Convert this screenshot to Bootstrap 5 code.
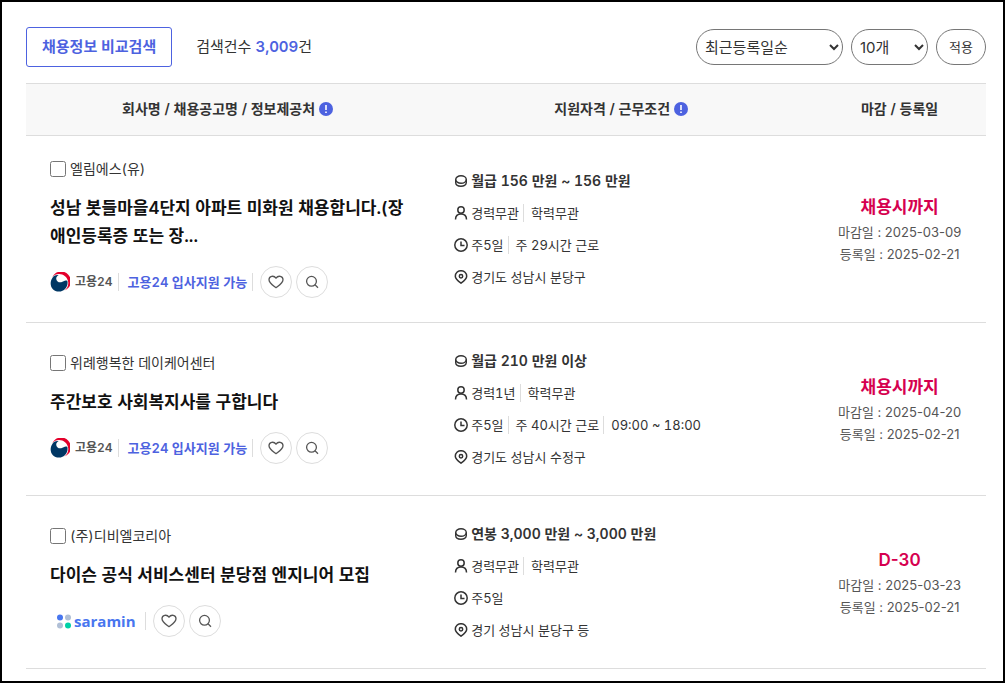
<!DOCTYPE html>
<html lang="ko">
<head>
<meta charset="utf-8">
<meta name="viewport" content="width=device-width, initial-scale=1">
<title>채용정보 검색</title>
<link href="https://cdn.jsdelivr.net/npm/bootstrap@5.3.0/dist/css/bootstrap.min.css" rel="stylesheet">
<style>
:root { --point: #4d62e0; --ink: #333; }
body { font-family: Inter, "Noto Sans CJK KR", sans-serif; font-variant-numeric: tabular-nums; color: var(--ink); background: #fff; font-size: 13px; line-height: 20px; }
.page-frame { border: 2px solid #000; min-height: 100vh; padding: 25px 17px 12px 24px; }
.compare-btn { border: 1px solid var(--point); color: var(--point); background: #fff; border-radius: 3px; height: 40px; padding: 0 15px; font-size: 15px; font-weight: 600; }
.result-count { font-size: 15px; }
.result-count strong { color: var(--point); font-weight: 600; }
.pill { height: 36px; border: 1px solid #767676; border-radius: 18px; background: #fff; color: var(--ink); }
select.pill { font-size: 15px; padding: 0 4px; }
.pill-sort { width: 147px; }
.pill-size { width: 77px; }
.pill-apply { font-size: 13px; width: 50px; padding: 0; }
.job-table { border-collapse: collapse; table-layout: fixed; }
.job-table th { height: 52px; padding-bottom: 3px; background: #f8f8f8; font-size: 14px; font-weight: 600; text-align: center; }
.job-table tr { border-bottom: 1px solid #ddd; }
.job-table thead tr { border-top: 1px solid #ddd; }
.job-table td { vertical-align: middle; }
.col-job { width: 42%; }
.col-date { width: 18%; }
.cell-job { padding: 24px; }
.cell-cond { padding: 22px 25px; }
.company { font-size: 14px; line-height: 18px; }
.company input { width: 16px; height: 16px; margin: 0; }
.job-title { font-size: 17px; line-height: 28px; font-weight: 600; color: #111; word-break: break-all; }
.job-title a, .apply-link { color: inherit; text-decoration: none; }
.job-table .apply-link { color: var(--point); font-weight: 600; }
.vbar { width: 1px; height: 18px; background: #ddd; }
.source { gap: 5px; }
.brand-gov { font-size: 12px; font-weight: 600; color: #555; }
.brand-saramin { font: 700 15px/20px "Open Sans", sans-serif; color: #4876ef; }
.saramin-logo { gap: 2px; padding: 0 4px 0 7px; }
.tools { margin-left: 2px; }
.round-btn { width: 32px; height: 32px; border: 1px solid #ddd; border-radius: 50%; background: #fff; padding: 0; }
.round-btn svg { display: block; margin: auto; }
.cond { height: 32px; gap: 3px; }
.cond-pay { font-size: 14px; font-weight: 600; }
.cond .vbar { margin: 0 4px 0 1px; }
.due { font-size: 17px; line-height: 28px; font-weight: 600; color: #d6004f; font-variant-numeric: normal; }
.dates { line-height: 22px; color: #555; font-size: 13px; font-variant-numeric: normal; }
</style>
</head>
<body>
<svg class="d-none">
  <symbol id="i-info" viewBox="0 0 14 14"><circle cx="7" cy="7" r="7" fill="#4d62e0"/><path d="M7 3v5M7 9.500v1.500" stroke="#fff" stroke-width="1.600" fill="none"/></symbol>
  <symbol id="i-coin" viewBox="0 0 14 14"><g fill="none" stroke="#333" stroke-width="1.400"><ellipse cx="7" cy="5.500" rx="5.300" ry="3.800"/><path d="M1.700 5.500v3c0 5 10.600 5 10.600 0v-3"/></g></symbol>
  <symbol id="i-user" viewBox="0 0 14 14"><g fill="none" stroke="#333" stroke-width="1.500"><circle cx="7" cy="4" r="3.200"/><path d="M1.500 13.500c0-3.500 2.200-5.500 5.500-5.500s5.500 2 5.500 5.500"/></g></symbol>
  <symbol id="i-clock" viewBox="0 0 14 14"><g fill="none" stroke="#333" stroke-width="1.500"><circle cx="7" cy="7" r="6.200"/><path d="M7 3.500v4h3.500"/></g></symbol>
  <symbol id="i-pin" viewBox="0 0 14 14"><g fill="none" stroke="#333" stroke-width="1.500"><path d="M7 13.200C4 11 1.300 9 1.300 6.200a5.700 5.500 0 0 1 11.400 0C12.700 9 10 11 7 13.200z"/><circle cx="7" cy="6.300" r="1.700"/></g></symbol>
  <symbol id="i-heart" viewBox="0 0 16 16"><path d="M8 13.700C5 11.400 1 9 1 5.700 1 2 5.800 1 8 4.200 10.200 1 15 2 15 5.700 15 9 11 11.400 8 13.700z" fill="none" stroke="#555" stroke-width="1.300" stroke-linejoin="round"/></symbol>
  <symbol id="i-search" viewBox="0 0 16 16"><g fill="none" stroke="#555" stroke-width="1.300"><circle cx="7.500" cy="7.300" r="4.900"/><path d="M11 10.800l3 3"/></g></symbol>
  <symbol id="i-gov" viewBox="0 0 20 20"><path d="M2.200 5.200A9.800 9.800 0 1 1 14.500 18.500c2.800-2.200 4.100-5 3.700-8.500C17.500 5 13.500 1.900 9 1.900c-2.800 0-5 1.100-6.800 3.300z" fill="#e4002b"/><path d="M2.200 6.200C3.500 3.900 6 2.700 8.600 3.200 6.800 4 6 5.500 6.300 7.200c.4 2.200 2.600 3.600 4.900 3 2.300-.6 3.700-2.300 6.200-1.300C18.400 14 15 19.300 8.900 19.600 2 19.600-1.600 12.400 2.200 6.200z" fill="#003764"/></symbol>
  <symbol id="i-dots" viewBox="0 0 15 15"><circle cx="3" cy="3.500" r="3" fill="#4876ef"/><circle cx="11" cy="3.500" r="3" fill="#b0bfd6"/><circle cx="3" cy="11.500" r="3" fill="#b0bfd6"/><circle cx="11" cy="11.500" r="3" fill="#00d1a7"/></symbol>
</svg>
<main class="page-frame">
  <div class="d-flex align-items-center justify-content-between mb-3">
    <div class="d-flex align-items-center gap-4">
      <button type="button" class="compare-btn">채용정보 비교검색</button>
      <div class="result-count">검색건수 <strong>3,009</strong>건</div>
    </div>
    <form class="d-flex gap-2">
      <select class="pill pill-sort" aria-label="정렬"><option>최근등록일순</option></select>
      <select class="pill pill-size" aria-label="표시 개수"><option>10개</option></select>
      <button type="button" class="pill pill-apply">적용</button>
    </form>
  </div>
  <table class="job-table w-100">
    <colgroup><col class="col-job"><col><col class="col-date"></colgroup>
    <thead><tr>
      <th scope="col"><span class="d-flex align-items-center justify-content-center gap-1">회사명 / 채용공고명 / 정보제공처 <svg width="14" height="14"><use href="#i-info"/></svg></span></th>
      <th scope="col"><span class="d-flex align-items-center justify-content-center gap-1">지원자격 / 근무조건 <svg width="14" height="14"><use href="#i-info"/></svg></span></th>
      <th scope="col">마감 / 등록일</th>
    </tr></thead>
    <tbody>
      <tr>
        <td class="cell-job">
          <div class="company d-flex align-items-center gap-1"><input type="checkbox" id="job1"><label for="job1">엘림에스(유)</label></div>
          <div class="job-title my-3"><a href="#">성남 봇들마을4단지 아파트 미화원 채용합니다.(장애인등록증 또는 장...</a></div>
          <div class="source d-flex align-items-center">
            <svg width="20" height="20"><use href="#i-gov"/></svg><span class="brand-gov">고용24</span><span class="vbar"></span>
            <a href="#" class="apply-link ms-1">고용24 입사지원 가능</a><span class="vbar"></span>
            <div class="tools d-flex gap-1">
              <button type="button" class="round-btn" aria-label="관심"><svg width="16" height="16"><use href="#i-heart"/></svg></button>
              <button type="button" class="round-btn" aria-label="미리보기"><svg width="16" height="16"><use href="#i-search"/></svg></button>
            </div>
          </div>
        </td>
        <td class="cell-cond">
          <div class="cond cond-pay d-flex align-items-center"><svg width="14" height="14"><use href="#i-coin"/></svg>월급 156 만원 ~ 156 만원</div>
          <div class="cond d-flex align-items-center"><svg width="14" height="14"><use href="#i-user"/></svg><span>경력무관</span><span class="vbar"></span><span>학력무관</span></div>
          <div class="cond d-flex align-items-center"><svg width="14" height="14"><use href="#i-clock"/></svg><span>주5일</span><span class="vbar"></span><span>주 29시간 근로</span></div>
          <div class="cond d-flex align-items-center"><svg width="14" height="14"><use href="#i-pin"/></svg>경기도 성남시 분당구</div>
        </td>
        <td class="text-center"><div class="due">채용시까지</div><div class="dates">마감일 : 2025-03-09<br>등록일 : 2025-02-21</div></td>
      </tr>
      <tr>
        <td class="cell-job">
          <div class="company d-flex align-items-center gap-1"><input type="checkbox" id="job2"><label for="job2">위례행복한 데이케어센터</label></div>
          <div class="job-title my-3"><a href="#">주간보호 사회복지사를 구합니다</a></div>
          <div class="source d-flex align-items-center">
            <svg width="20" height="20"><use href="#i-gov"/></svg><span class="brand-gov">고용24</span><span class="vbar"></span>
            <a href="#" class="apply-link ms-1">고용24 입사지원 가능</a><span class="vbar"></span>
            <div class="tools d-flex gap-1">
              <button type="button" class="round-btn" aria-label="관심"><svg width="16" height="16"><use href="#i-heart"/></svg></button>
              <button type="button" class="round-btn" aria-label="미리보기"><svg width="16" height="16"><use href="#i-search"/></svg></button>
            </div>
          </div>
        </td>
        <td class="cell-cond">
          <div class="cond cond-pay d-flex align-items-center"><svg width="14" height="14"><use href="#i-coin"/></svg>월급 210 만원 이상</div>
          <div class="cond d-flex align-items-center"><svg width="14" height="14"><use href="#i-user"/></svg><span>경력1년</span><span class="vbar"></span><span>학력무관</span></div>
          <div class="cond d-flex align-items-center"><svg width="14" height="14"><use href="#i-clock"/></svg><span>주5일</span><span class="vbar"></span><span>주 40시간 근로</span><span class="vbar"></span><span>09:00 ~ 18:00</span></div>
          <div class="cond d-flex align-items-center"><svg width="14" height="14"><use href="#i-pin"/></svg>경기도 성남시 수정구</div>
        </td>
        <td class="text-center"><div class="due">채용시까지</div><div class="dates">마감일 : 2025-04-20<br>등록일 : 2025-02-21</div></td>
      </tr>
      <tr>
        <td class="cell-job">
          <div class="company d-flex align-items-center gap-1"><input type="checkbox" id="job3"><label for="job3">(주)디비엘코리아</label></div>
          <div class="job-title my-3"><a href="#">다이슨 공식 서비스센터 분당점 엔지니어 모집</a></div>
          <div class="source d-flex align-items-center">
            <span class="saramin-logo d-flex align-items-center"><svg width="15" height="15"><use href="#i-dots"/></svg><span class="brand-saramin">saramin</span></span><span class="vbar"></span>
            <div class="tools d-flex gap-1">
              <button type="button" class="round-btn" aria-label="관심"><svg width="16" height="16"><use href="#i-heart"/></svg></button>
              <button type="button" class="round-btn" aria-label="미리보기"><svg width="16" height="16"><use href="#i-search"/></svg></button>
            </div>
          </div>
        </td>
        <td class="cell-cond">
          <div class="cond cond-pay d-flex align-items-center"><svg width="14" height="14"><use href="#i-coin"/></svg>연봉 3,000 만원 ~ 3,000 만원</div>
          <div class="cond d-flex align-items-center"><svg width="14" height="14"><use href="#i-user"/></svg><span>경력무관</span><span class="vbar"></span><span>학력무관</span></div>
          <div class="cond d-flex align-items-center"><svg width="14" height="14"><use href="#i-clock"/></svg>주5일</div>
          <div class="cond d-flex align-items-center"><svg width="14" height="14"><use href="#i-pin"/></svg>경기 성남시 분당구 등</div>
        </td>
        <td class="text-center"><div class="due">D-30</div><div class="dates">마감일 : 2025-03-23<br>등록일 : 2025-02-21</div></td>
      </tr>
    </tbody>
  </table>
</main>
<script src="https://cdn.jsdelivr.net/npm/bootstrap@5.3.0/dist/js/bootstrap.bundle.min.js"></script>
</body>
</html>
